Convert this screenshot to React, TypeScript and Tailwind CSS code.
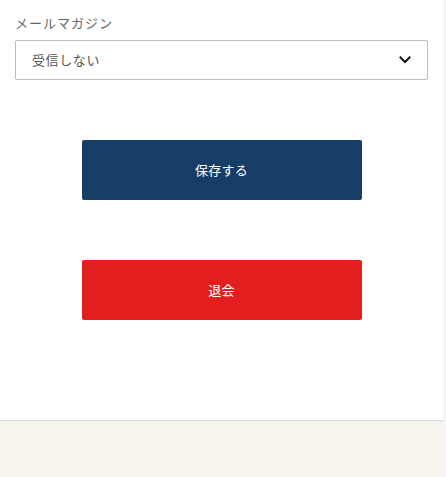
import React from "react";

export default function App() {
  const font = { fontFamily: '"Noto Sans CJK JP", "Noto Sans", sans-serif' };
  return (
    <div className="flex w-[446px] h-[477px] bg-white" style={font}>
      <div className="w-[443px] flex flex-col">
        <div className="px-[15px] pt-[13px] pb-[100px] border-b border-[#d6dde1]">
          <div className="text-[13px] leading-[20px] tracking-[1px] text-[#666]">メールマガジン</div>
          <div className="mt-[7px] h-[40px] border border-[#bdbdbd] rounded-[2px] flex items-center justify-between pl-[16px] pr-[16px]">
            <span className="text-[13px] tracking-[0.6px] text-[#555]">受信しない</span>
            <svg width="12" height="8" viewBox="0 0 12 8" fill="none">
              <path d="M1.5 1.5 L6 6 L10.5 1.5" stroke="#111" strokeWidth="2" strokeLinecap="square" />
            </svg>
          </div>
          <div className="flex justify-center mt-[60px]">
            <button className="w-[280px] h-[60px] rounded-[2px] bg-[#173e66] text-white text-[13px] tracking-[0.3px]">保存する</button>
          </div>
          <div className="flex justify-center mt-[60px]">
            <button className="w-[280px] h-[60px] rounded-[2px] bg-[#e21e1f] text-white text-[13px] tracking-[0.3px]">退会</button>
          </div>
        </div>
        <div className="flex-1 bg-[#f7f4ee]" />
      </div>
      <div className="w-[3px] bg-[#f4f5f9]" />
    </div>
  );
}
